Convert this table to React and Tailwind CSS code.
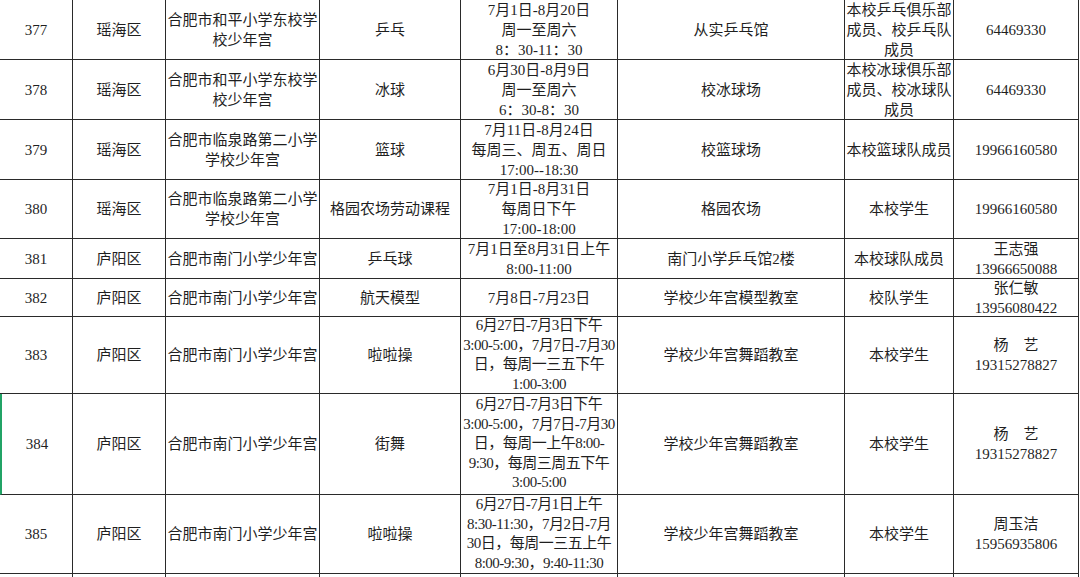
const COLS = [73, 93, 154, 141, 157, 227, 109, 125]

// each cell is a list of lines so the wrapping matches the sheet exactly
const ROWS = [
  {
    h: 60,
    cells: [
      ['377'],
      ['瑶海区'],
      ['合肥市和平小学东校学', '校少年宫'],
      ['乒乓'],
      ['7月1日-8月20日', '周一至周六', '8：30-11：30'],
      ['从实乒乓馆'],
      ['本校乒乓俱乐部', '成员、校乒乓队', '成员'],
      ['64469330'],
    ],
  },
  {
    h: 60,
    cells: [
      ['378'],
      ['瑶海区'],
      ['合肥市和平小学东校学', '校少年宫'],
      ['冰球'],
      ['6月30日-8月9日', '周一至周六', '6：30-8：30'],
      ['校冰球场'],
      ['本校冰球俱乐部', '成员、校冰球队', '成员'],
      ['64469330'],
    ],
  },
  {
    h: 60,
    cells: [
      ['379'],
      ['瑶海区'],
      ['合肥市临泉路第二小学', '学校少年宫'],
      ['篮球'],
      ['7月11日-8月24日', '每周三、周五、周日', '17:00--18:30'],
      ['校篮球场'],
      ['本校篮球队成员'],
      ['19966160580'],
    ],
  },
  {
    h: 59,
    cells: [
      ['380'],
      ['瑶海区'],
      ['合肥市临泉路第二小学', '学校少年宫'],
      ['格园农场劳动课程'],
      ['7月1日-8月31日', '每周日下午', '17:00-18:00'],
      ['格园农场'],
      ['本校学生'],
      ['19966160580'],
    ],
  },
  {
    h: 40,
    cells: [
      ['381'],
      ['庐阳区'],
      ['合肥市南门小学少年宫'],
      ['乒乓球'],
      ['7月1日至8月31日上午', '8:00-11:00'],
      ['南门小学乒乓馆2楼'],
      ['本校球队成员'],
      ['王志强', '13966650088'],
    ],
  },
  {
    h: 38,
    cells: [
      ['382'],
      ['庐阳区'],
      ['合肥市南门小学少年宫'],
      ['航天模型'],
      ['7月8日-7月23日'],
      ['学校少年宫模型教室'],
      ['校队学生'],
      ['张仁敏', '13956080422'],
    ],
  },
  {
    h: 77,
    cells: [
      ['383'],
      ['庐阳区'],
      ['合肥市南门小学少年宫'],
      ['啦啦操'],
      ['6月27日-7月3日下午', '3:00-5:00，7月7日-7月30', '日，每周一三五下午', '1:00-3:00'],
      ['学校少年宫舞蹈教室'],
      ['本校学生'],
      ['杨\u3000艺', '19315278827'],
    ],
  },
  {
    h: 101,
    marked: true,
    cells: [
      ['384'],
      ['庐阳区'],
      ['合肥市南门小学少年宫'],
      ['街舞'],
      ['6月27日-7月3日下午', '3:00-5:00，7月7日-7月30', '日，每周一上午8:00-', '9:30，每周三周五下午', '3:00-5:00'],
      ['学校少年宫舞蹈教室'],
      ['本校学生'],
      ['杨\u3000艺', '19315278827'],
    ],
  },
  {
    h: 79,
    cells: [
      ['385'],
      ['庐阳区'],
      ['合肥市南门小学少年宫'],
      ['啦啦操'],
      ['6月27日-7月1日上午', '8:30-11:30，7月2日-7月', '30日，每周一三五上午', '8:00-9:30，9:40-11:30'],
      ['学校少年宫舞蹈教室'],
      ['本校学生'],
      ['周玉洁', '15956935806'],
    ],
  },
]

function Cell({ width, lines, tight, squeeze, marked }) {
  return (
    <div
      style={{ width }}
      className={
        'flex shrink-0 flex-col items-center justify-center overflow-visible border-r border-b border-[#2a2a2a] text-center ' +
        (tight ? 'leading-[19.5px]' : 'leading-[20px]') +
        (squeeze ? ' tracking-[-0.5px]' : '') +
        (marked ? ' border-l-2 border-l-[#21a366]' : '')
      }
    >
      {lines.map((line, i) => (
        <span key={i} className="whitespace-pre">
          {line}
        </span>
      ))}
    </div>
  )
}

export default function App() {
  return (
    <div className="h-[577px] w-[1080px] overflow-hidden bg-white font-['Liberation_Serif','Noto_Sans_CJK_SC',serif] text-[15px] text-[#1f1f1f]">
      {ROWS.map((row, r) => (
        <div key={r} className="flex" style={{ height: row.h }}>
          {row.cells.map((lines, c) => (
            <Cell
              key={c}
              width={COLS[c]}
              lines={lines}
              tight={lines.length >= 4}
              squeeze={c === 4 && lines.length >= 4}
              marked={row.marked && c === 0}
            />
          ))}
        </div>
      ))}
      <div className="flex h-[4px]">
        {COLS.map((w, c) => (
          <div key={c} style={{ width: w }} className="shrink-0 border-r border-[#2a2a2a]" />
        ))}
      </div>
    </div>
  )
}
